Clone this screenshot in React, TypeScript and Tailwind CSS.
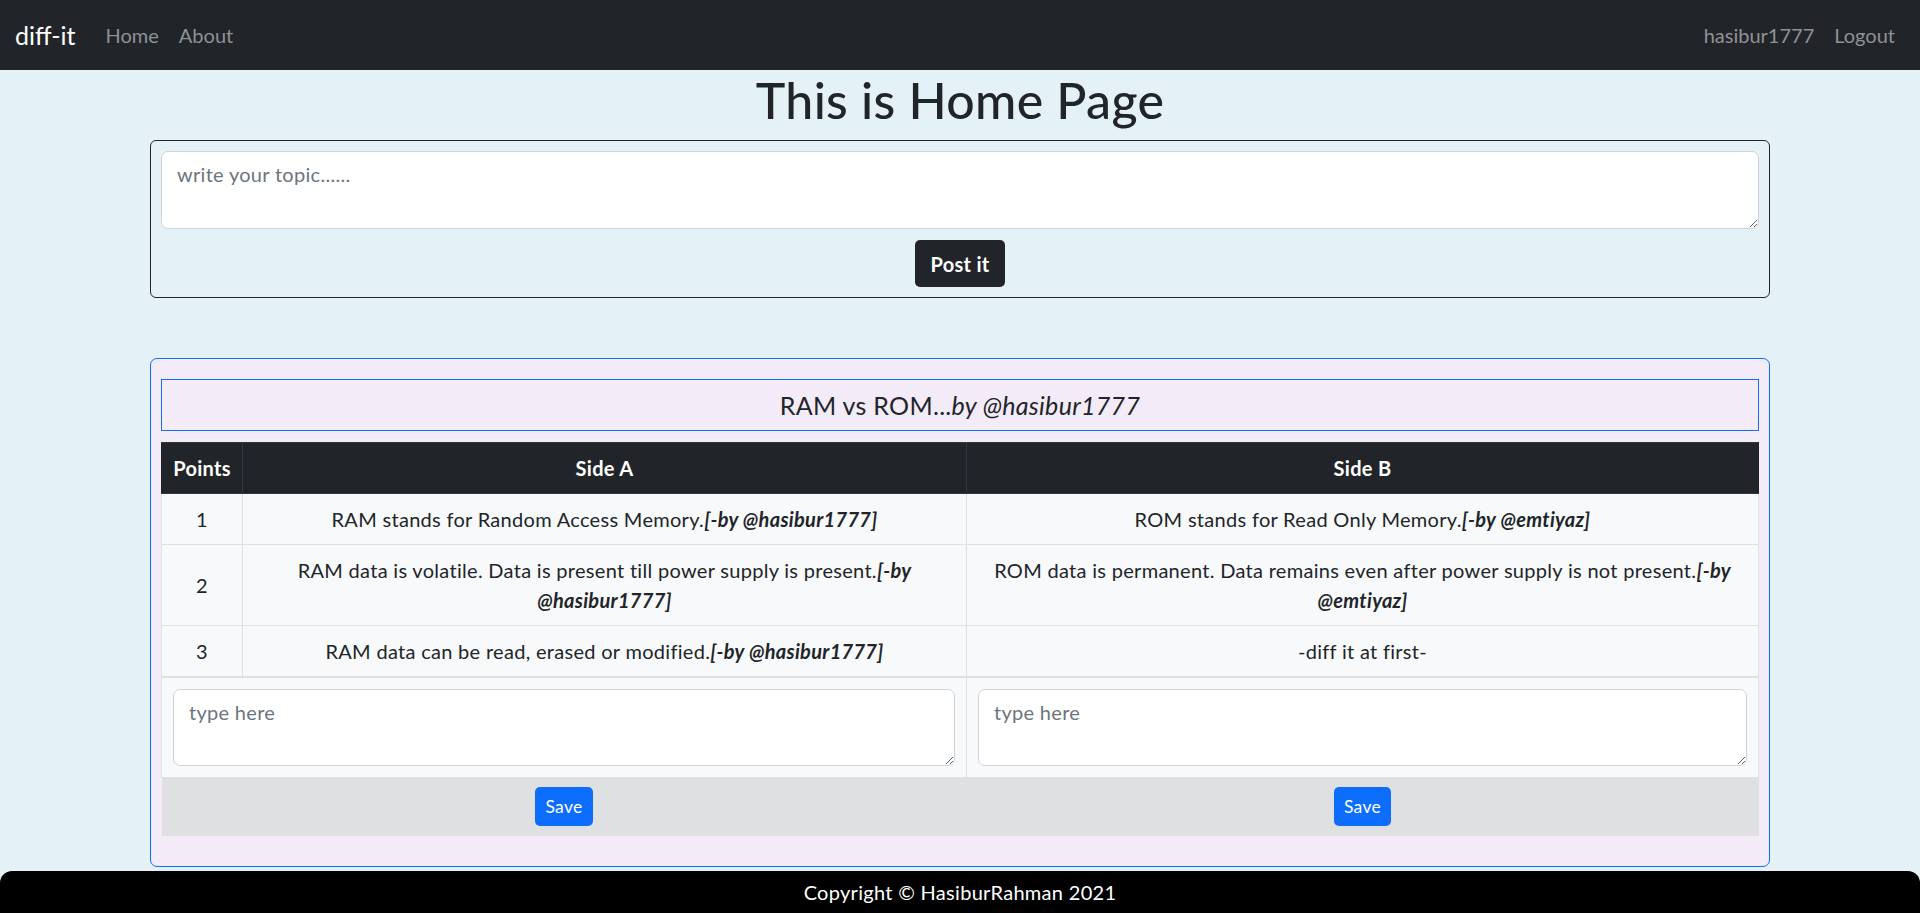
import React from "react";

const rows = [
  {
    id: 1,
    a: <>RAM stands for Random Access Memory.<b><i>[-by @hasibur1777]</i></b></>,
    b: <>ROM stands for Read Only Memory.<b><i>[-by @emtiyaz]</i></b></>,
  },
  {
    id: 2,
    a: (
      <>
        <span className="whitespace-nowrap">RAM data is volatile. Data is present till power supply is present.<b><i>[-by</i></b></span>
        <br />
        <b><i>@hasibur1777]</i></b>
      </>
    ),
    b: (
      <>
        <span className="whitespace-nowrap">ROM data is permanent. Data remains even after power supply is not present.<b><i>[-by</i></b></span>
        <br />
        <b><i>@emtiyaz]</i></b>
      </>
    ),
  },
  {
    id: 3,
    a: <>RAM data can be read, erased or modified.<b><i>[-by @hasibur1777]</i></b></>,
    b: <>-diff it at first-</>,
  },
];

function App() {
  return (
    <div className="min-h-screen flex flex-col bg-[#e4f2f7] font-['Lato','Noto_Sans',sans-serif] tracking-[0.3px] text-[#212529] text-[20px] leading-[30px]">
      {/* navbar */}
      <nav className="h-[70px] shrink-0 bg-[#212529] flex items-center justify-between px-[15px] tracking-normal">
        <div className="flex items-center">
          <a className="text-[25px] leading-[37px] text-white mr-[20px]">diff-it</a>
          <a className="px-[10px] text-[#8f9194]">Home</a>
          <a className="px-[10px] text-[#8f9194]">About</a>
        </div>
        <div className="flex items-center">
          <a className="px-[10px] text-[#8f9194]">hasibur1777</a>
          <a className="px-[10px] text-[#8f9194]">Logout</a>
        </div>
      </nav>

      <main className="w-[1620px] mx-auto">
        <h1 className="text-[50px] leading-[60px] font-medium text-center mb-[10px]">This is Home Page</h1>

        <div className="border border-[#212529] rounded-[6px] p-[10px] flex flex-col items-center">
          <textarea
            className="w-full h-[78px] bg-white border border-[#ced4da] rounded-[7px] px-[15px] py-[7px] outline-none placeholder:text-[#6c757d]"
            placeholder="write your topic......"
          ></textarea>
          <button className="mt-[11px] h-[47px] px-[15px] rounded-[5px] bg-[#212529] text-white font-bold">
            Post it
          </button>
        </div>

        <div className="mt-[60px] border border-[#0d6efd] rounded-[7px] bg-[#f3ebf7] px-[10px] pt-[20px] pb-[10px]">
          <div className="border border-[#0d6efd] py-[10px] text-center text-[25px] leading-[30px] mb-[11px]">
            RAM vs ROM...<i>by @hasibur1777</i>
          </div>

          <table className="w-full table-fixed border-collapse mb-[20px]">
            <colgroup>
              <col className="w-[81px]" />
              <col className="w-[724px]" />
              <col />
            </colgroup>
            <thead>
              <tr className="bg-[#212529] text-white font-bold">
                <th className="py-[10px] px-[8px] border border-[#32383e] border-l-[#212529]">Points</th>
                <th className="py-[10px] px-[10px] border border-[#32383e]">Side A</th>
                <th className="py-[10px] px-[10px] border border-[#32383e] border-r-[#212529]">Side B</th>
              </tr>
            </thead>
            <tbody>
              {rows.map((r) => (
                <tr key={r.id} className="bg-[#f8f9fa] text-center">
                  <td className="py-[10px] px-[10px] border border-[#dee2e6]">{r.id}</td>
                  <td className="py-[10px] px-[10px] border border-[#dee2e6]">{r.a}</td>
                  <td className="py-[10px] px-[10px] border border-[#dee2e6]">{r.b}</td>
                </tr>
              ))}
            </tbody>
            <tfoot>
              <tr className="bg-[#f8f9fa] border-t-2 border-[#dee2e6]">
                <td colSpan={2} className="p-[11px] border-x border-[#dee2e6] align-top">
                  <textarea
                    className="block w-full h-[77px] bg-white border border-[#ced4da] rounded-[7px] px-[15px] py-[7px] outline-none placeholder:text-[#6c757d]"
                    placeholder="type here"
                  ></textarea>
                </td>
                <td className="p-[11px] border-x border-[#dee2e6] align-top">
                  <textarea
                    className="block w-full h-[77px] bg-white border border-[#ced4da] rounded-[7px] px-[15px] py-[7px] outline-none placeholder:text-[#6c757d]"
                    placeholder="type here"
                  ></textarea>
                </td>
              </tr>
              <tr className="bg-[#dfe0e2]">
                <td colSpan={2} className="py-[10px] text-center">
                  <button className="h-[39px] px-[10px] rounded-[5px] bg-[#0d6efd] text-white text-[17.5px] leading-[26px]">
                    Save
                  </button>
                </td>
                <td className="py-[10px] text-center">
                  <button className="h-[39px] px-[10px] rounded-[5px] bg-[#0d6efd] text-white text-[17.5px] leading-[26px]">
                    Save
                  </button>
                </td>
              </tr>
            </tfoot>
          </table>
        </div>
      </main>

      <footer className="mt-auto h-[42px] shrink-0 bg-black rounded-t-[12px] text-white flex items-center justify-center">
        Copyright © HasiburRahman 2021
      </footer>
    </div>
  );
}

export default App;
